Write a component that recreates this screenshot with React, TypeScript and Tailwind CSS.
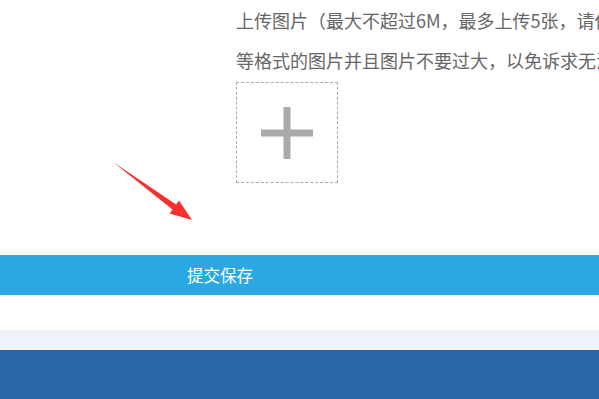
export default function App() {
  return (
    <div
      className="relative w-[599px] h-[399px] overflow-hidden bg-white"
      style={{ fontFamily: '"Microsoft YaHei", "Noto Sans CJK SC", "Noto Sans", sans-serif' }}
    >
      <div className="pl-[236px] text-[18px] leading-[40px] text-[#666] whitespace-nowrap">
        <p>上传图片（最大不超过6M，最多上传5张，请使用jpg、png</p>
        <p>等格式的图片并且图片不要过大，以免诉求无法提交）</p>
        <div className="mt-[2px] w-[102px] h-[101px] border border-dashed border-[#aaa] flex items-center justify-center">
          <svg width="52" height="52" viewBox="0 0 52 52">
            <rect x="0" y="22.5" width="52" height="7" fill="#aaa" />
            <rect x="22.5" y="0" width="7" height="52" fill="#aaa" />
          </svg>
        </div>
      </div>

      <div className="mt-[72px] h-[40px] bg-[#29a8e1] flex items-center pl-[187px]">
        <span className="text-white text-[16.5px]">提交保存</span>
      </div>
      <div className="h-[35px] bg-white" />
      <div className="h-[20px] bg-[#edf3f8]" />
      <div className="h-[60px] bg-[#2a65a8]" />

      {/* red annotation arrow */}
      <svg className="absolute left-0 top-0" width="599" height="399" viewBox="0 0 599 399">
        <polygon
          points="113,162 176.1,204.6 179,200.5 192,220 169.6,213.4 172.5,209.4"
          fill="#f5302e"
        />
      </svg>
    </div>
  );
}
